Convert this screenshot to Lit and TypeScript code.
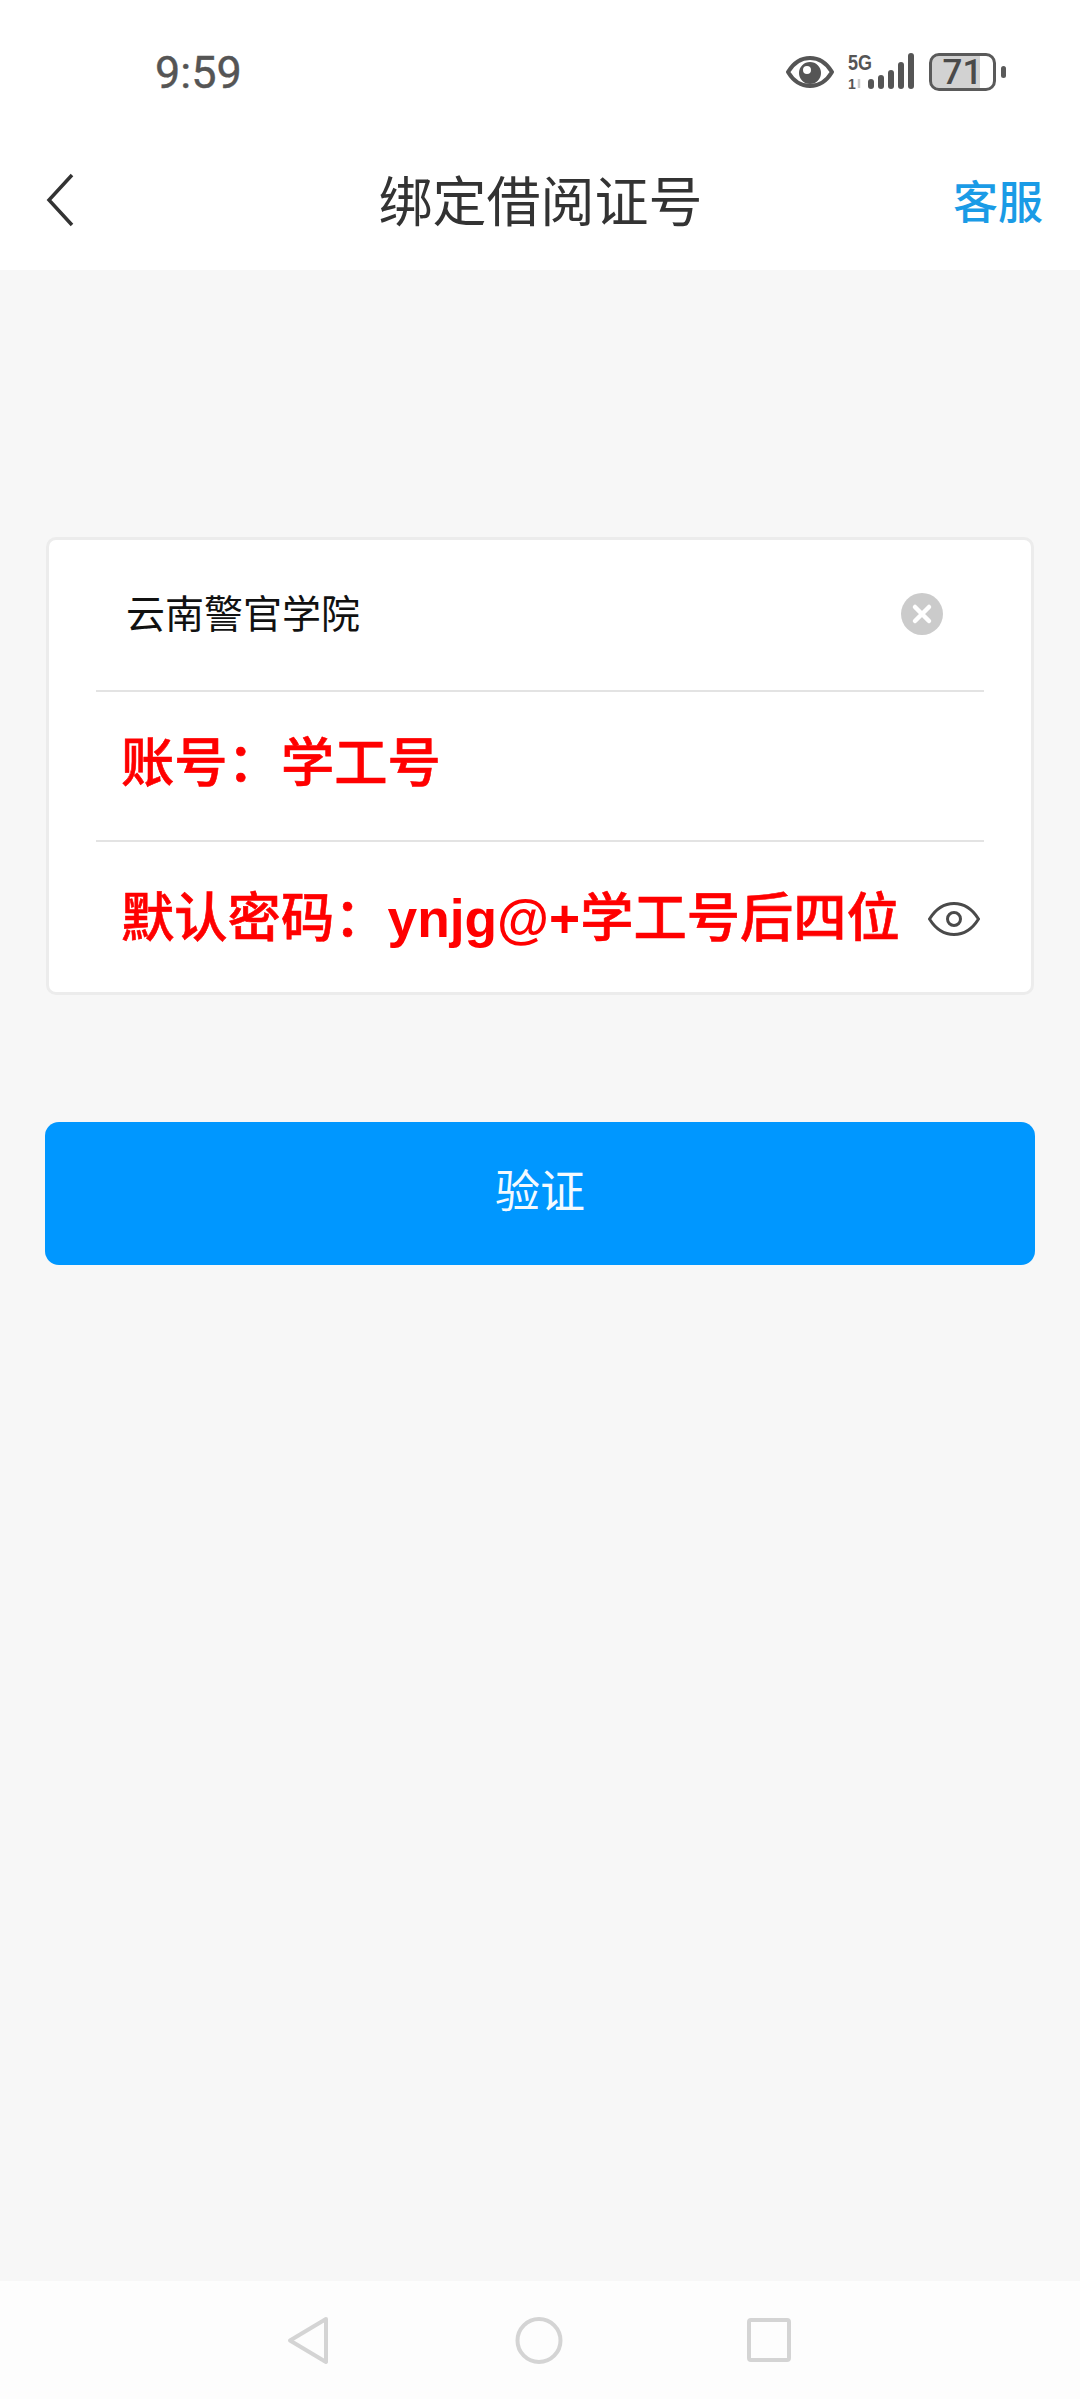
import { LitElement, html, css } from "lit";
import { customElement } from "lit/decorators.js";

@customElement("app-root")
export class AppRoot extends LitElement {
  static styles = css`
    :host { display: block; width: 1080px; height: 2399px; font-family: "Liberation Sans", "Noto Sans CJK SC", sans-serif; }
    .page { width: 1080px; height: 2399px; display: flex; flex-direction: column; background: #f7f7f7; overflow: hidden; }
    .top { background: #fff; height: 270px; flex: none; }
    .status { height: 144px; display: flex; align-items: center; padding: 0 74px 0 155px; box-sizing: border-box; }
    .time { font-family: Roboto, sans-serif; font-size: 45px; font-weight: 400; color: #555; margin-right: auto; -webkit-text-stroke: 0.4px #555; }
    .s-eye { width: 48px; height: 32px; margin-right: 14px; }
    .signal { width: 66px; height: 48px; margin-right: 15px; }
    .signal text { font-family: "Liberation Sans", sans-serif; font-weight: 700; fill: #555; }
    .battery { width: 67px; height: 38px; box-sizing: border-box; border: 3px solid #5a5a5a; border-radius: 10px; background: linear-gradient(90deg, #d2d2d2 0 78%, #fff 78%); background-clip: padding-box; display: flex; align-items: center; justify-content: center; font-family: Roboto, sans-serif; font-size: 35px; font-weight: 500; color: #4a4a4a; line-height: 1; }
    .tip { width: 5px; height: 12px; background: #5a5a5a; border-radius: 3px; margin-left: 5px; }
    .nav { height: 110px; display: flex; align-items: center; padding: 0 37px 0 46px; box-sizing: border-box; }
    .back { width: 28px; height: 54px; flex: none; position: relative; top: 1px; }
    .title { flex: 1; text-align: center; font-size: 54px; color: #333; font-family: "Noto Sans CJK SC", sans-serif; line-height: 1; padding-left: 54px; }
    .service { font-size: 45px; color: #1a9be6; font-family: "Noto Sans CJK SC", sans-serif; font-weight: 500; line-height: 1; }
    main { flex: 1; padding: 267px 45px 0; }
    .card { margin: 0 1px; height: 458px; box-sizing: border-box; background: #fff; border: 3px solid #ececec; border-radius: 10px; padding: 0 47px 0 47px; display: flex; flex-direction: column; }
    .row { display: flex; align-items: center; border-bottom: 2px solid #e3e3e3; box-sizing: border-box; }
    .r1 { height: 152px; padding: 0 41px 3px 30px; }
    .r2 { height: 150px; padding: 0 0 4px 25px; }
    .r3 { flex: 1; border-bottom: 0; padding: 3px 4px 0 25px; }
    .school { flex: 1; font-size: 39px; color: #111; font-family: "Noto Sans CJK SC", sans-serif; line-height: 1; position: relative; top: -2px; }
    .clear { width: 42px; height: 42px; }
    .red { flex: 1; font-size: 53.300px; font-weight: 500; color: #ff0000; line-height: 1; white-space: nowrap; -webkit-text-stroke: 0.6px #ff0000; }
    .latin { font-weight: 700; -webkit-text-stroke: 0; }
    .eye { width: 52px; height: 34px; flex: none; }
    .btn { margin-top: 127px; height: 143px; background: #0097ff; border-radius: 14px; display: flex; align-items: center; justify-content: center; padding-bottom: 10px; box-sizing: border-box; color: #f4faff; font-size: 45px; font-family: "Noto Sans CJK SC", sans-serif; line-height: 1; }
    .bottom { height: 118px; flex: none; background: #fdfdfd; display: flex; align-items: center; padding-left: 287px; }
    .bottom svg { flex: none; fill: none; stroke: #d4d4d4; stroke-width: 4; stroke-linejoin: round; }
    .tri { width: 43px; height: 49px; }
    .circ { width: 48px; height: 49px; margin-left: 185px; }
    .sq { width: 44px; height: 44px; margin-left: 184px; }
  `;

  render() {
    return html`
      <div class="page">
        <header class="top">
          <div class="status">
            <span class="time">9:59</span>
            <svg class="s-eye" viewBox="0 0 48 32">
              <path d="M2 16C8 6 15 2 24 2s16 4 22 14c-6 10-13 14-22 14S8 26 2 16Z" fill="none" stroke="#555" stroke-width="4" stroke-linejoin="round"/>
              <path fill="#555" fill-rule="evenodd" d="M24 6a11 11 0 1 1 0 22 11 11 0 0 1 0-22Zm-3 4a4 4 0 1 0 0 8 4 4 0 0 0 0-8Z"/>
            </svg>
            <svg class="signal" viewBox="0 -5 66 48">
              <text x="0" y="17" font-size="22" textLength="24" lengthAdjust="spacingAndGlyphs">5G</text>
              <text x="0" y="36" font-size="14">1</text>
              <path d="M11 26v9" stroke="#ccc" stroke-width="2.500"/>
              <rect x="20" y="26" width="6" height="10" rx="3" fill="#555"/>
              <rect x="30" y="22" width="6" height="14" rx="3" fill="#555"/>
              <rect x="40" y="17" width="6" height="19" rx="3" fill="#555"/>
              <rect x="50" y="9" width="6" height="27" rx="3" fill="#555"/>
              <rect x="60" y="0" width="6" height="36" rx="3" fill="#555"/>
            </svg>
            <div class="battery">71</div>
            <div class="tip"></div>
          </div>
          <div class="nav">
            <svg class="back" viewBox="0 0 28 54"><path d="M26 2 3 27l23 25" fill="none" stroke="#333" stroke-width="3.500"/></svg>
            <div class="title">绑定借阅证号</div>
            <div class="service">客服</div>
          </div>
        </header>
        <main>
          <div class="card">
            <div class="row r1">
              <div class="school">云南警官学院</div>
              <svg class="clear" viewBox="0 0 42 42"><circle cx="21" cy="21" r="21" fill="#cbcbcb"/><path d="m14 14 14 14M28 14 14 28" stroke="#fff" stroke-width="4.500" stroke-linecap="round"/></svg>
            </div>
            <div class="row r2"><div class="red">账号：学工号</div></div>
            <div class="row r3">
              <div class="red">默认密码：<span class="latin">ynjg@+</span>学工号后四位</div>
              <svg class="eye" viewBox="0 0 52 34"><path d="M1.500 17C8 6.500 16 1.500 26 1.500S44 6.500 50.500 17C44 27.500 36 32.500 26 32.500S8 27.500 1.500 17Z" fill="none" stroke="#4a4a4a" stroke-width="3"/><circle cx="26" cy="17" r="6.500" fill="none" stroke="#4a4a4a" stroke-width="3"/></svg>
            </div>
          </div>
          <div class="btn">验证</div>
        </main>
        <footer class="bottom">
          <svg class="tri" viewBox="0 0 43 49"><path d="M39 3 3 24.500 39 46Z"/></svg>
          <svg class="circ" viewBox="0 0 48 49"><circle cx="24" cy="24.500" r="21.500"/></svg>
          <svg class="sq" viewBox="0 0 44 44"><rect x="2" y="2" width="40" height="40" rx="2"/></svg>
        </footer>
      </div>
    `;
  }
}
